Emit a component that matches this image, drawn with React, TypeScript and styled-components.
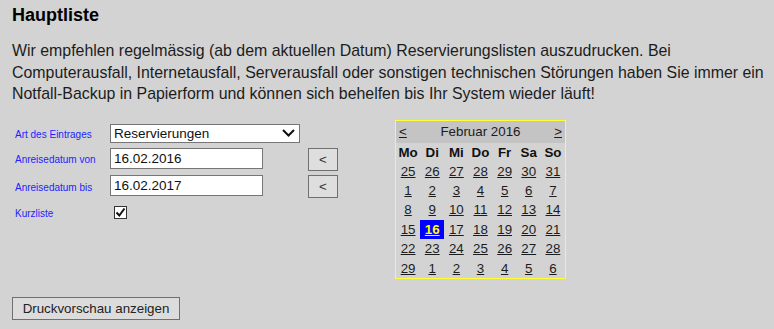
import { createGlobalStyle } from 'styled-components';
import styled from 'styled-components';

const GlobalStyle = createGlobalStyle`
	body {
		margin: 0;
		background: #d3d3d3;
		font-family: "Liberation Sans", Arial, sans-serif;
		color: #1c1c1c;
	}
`;

const Page = styled.div`
	padding: 0 0 0 12px;
	height: 329px;
	box-sizing: border-box;
	overflow: hidden;
`;

const Title = styled.h1`
	margin: 5px 0 0;
	font-size: 18px;
	font-weight: bold;
	color: #000;
	line-height: 21px;
`;

const Intro = styled.p`
	margin: 14px 0 0;
	font-size: 15.9px;
	line-height: 21.5px;
`;

const Body = styled.div`
	display: flex;
	align-items: flex-start;
	margin-top: 15px;
`;

const Form = styled.div`
	display: grid;
	grid-template-columns: 95px 198px 30px;
	grid-template-rows: 20px 23px 24px 20px;
	row-gap: 4px;
	width: 380px;
	padding-left: 3px;
	margin-top: 4px;
`;

const Label = styled.label`
	font-size: 10px;
	color: #1e1eff;
	align-self: center;
	padding-top: 1px;
`;

const Select = styled.div`
	grid-column: 2 / span 2;
	align-self: start;
	width: 190px;
	height: 19px;
	box-sizing: border-box;
	border: 1px solid #767676;
	background: #fff;
	display: flex;
	align-items: center;
	justify-content: space-between;
	padding: 0 4px 0 3px;
	font-size: 13.5px;
	color: #111;
`;

const Input = styled.div`
	width: 153px;
	height: 21px;
	box-sizing: border-box;
	border: 1px solid #767676;
	background: #fff;
	display: flex;
	align-items: center;
	padding-left: 3px;
	font-size: 13.5px;
	color: #111;
`;

const SmallButton = styled.button`
	width: 30px;
	height: 23px;
	box-sizing: border-box;
	border: 1px solid #707070;
	background: #dedede;
	font-family: "Liberation Sans", Arial, sans-serif;
	font-size: 13.33px;
	color: #333;
	padding: 0;
`;

const Check = styled.span`
	align-self: start;
	width: 13px;
	height: 13px;
	box-sizing: border-box;
	border: 1px solid #333;
	background: #fff;
	display: flex;
	align-items: center;
	justify-content: center;
	margin: 3px 0 0 4px;
`;

const Calendar = styled.table`
	border: 1px solid #ffff33;
	border-collapse: separate;
	border-spacing: 0;
	table-layout: fixed;
	width: 171px;
	font-size: 13.33px;
`;

const HeadRow = styled.tr`
	background: #c4c4c4;
	height: 22px;
`;

const Nav = styled.td<{ $align: string }>`
	text-align: ${p => p.$align};
	text-decoration: underline;
	color: #1c1c1c;
	padding: 0 3px;
`;

const Month = styled.td`
	text-align: center;
	color: #1c1c1c;
`;

const DayName = styled.th`
	font-weight: bold;
	text-align: center;
	height: 19px;
	padding: 0;
	color: #111;
`;

const Day = styled.td<{ $sel?: boolean }>`
	text-align: center;
	height: 19.4px;
	padding: 0;
	text-decoration: underline;
	color: ${p => (p.$sel ? '#ffff00' : '#1c1c1c')};
	font-weight: ${p => (p.$sel ? 'bold' : 'normal')};
	background: ${p => (p.$sel ? '#0000ff' : 'transparent')};
`;

const PreviewButton = styled.button`
	display: block;
	margin-top: 18px;
	width: 168px;
	height: 23px;
	box-sizing: border-box;
	border: 1px solid #707070;
	background: #dcdcdc;
	font-family: "Liberation Sans", Arial, sans-serif;
	font-size: 13.33px;
	color: #222;
	padding: 0;
`;

const weeks = [
	[25, 26, 27, 28, 29, 30, 31],
	[1, 2, 3, 4, 5, 6, 7],
	[8, 9, 10, 11, 12, 13, 14],
	[15, 16, 17, 18, 19, 20, 21],
	[22, 23, 24, 25, 26, 27, 28],
	[29, 1, 2, 3, 4, 5, 6],
];

const dayNames = ['Mo', 'Di', 'Mi', 'Do', 'Fr', 'Sa', 'So'];

export default function App() {
	return (
		<Page>
			<GlobalStyle />
			<Title>Hauptliste</Title>
			<Intro>
				Wir empfehlen regelmässig (ab dem aktuellen Datum) Reservierungslisten auszudrucken. Bei
				Computerausfall, Internetausfall, Serverausfall oder sonstigen technischen Störungen haben Sie immer ein
				Notfall-Backup in Papierform und können sich behelfen bis Ihr System wieder läuft!
			</Intro>
			<Body>
				<Form>
					<Label>Art des Eintrages</Label>
					<Select>
						<span>Reservierungen</span>
						<svg width="13" height="8" viewBox="0 0 13 8">
							<path d="M1 1 L6.5 6.5 L12 1" fill="none" stroke="#111" strokeWidth="2" />
						</svg>
					</Select>
					<Label>Anreisedatum von</Label>
					<Input>16.02.2016</Input>
					<SmallButton>&lt;</SmallButton>
					<Label>Anreisedatum bis</Label>
					<Input>16.02.2017</Input>
					<SmallButton>&lt;</SmallButton>
					<Label>Kurzliste</Label>
					<Check>
						<svg width="11" height="11" viewBox="0 0 11 11">
							<path d="M1.5 5.5 L4.3 8.5 L9.5 1.5" fill="none" stroke="#111" strokeWidth="2" />
						</svg>
					</Check>
				</Form>
				<Calendar>
					<tbody>
						<HeadRow>
							<Nav $align="left">&lt;</Nav>
							<Month colSpan={5}>Februar 2016</Month>
							<Nav $align="right">&gt;</Nav>
						</HeadRow>
						<tr>
							{dayNames.map(d => (
								<DayName key={d}>{d}</DayName>
							))}
						</tr>
						{weeks.map((w, i) => (
							<tr key={i}>
								{w.map((d, j) => (
									<Day key={j} $sel={i === 3 && d === 16}>
										{d}
									</Day>
								))}
							</tr>
						))}
					</tbody>
				</Calendar>
			</Body>
			<PreviewButton>Druckvorschau anzeigen</PreviewButton>
		</Page>
	);
}
